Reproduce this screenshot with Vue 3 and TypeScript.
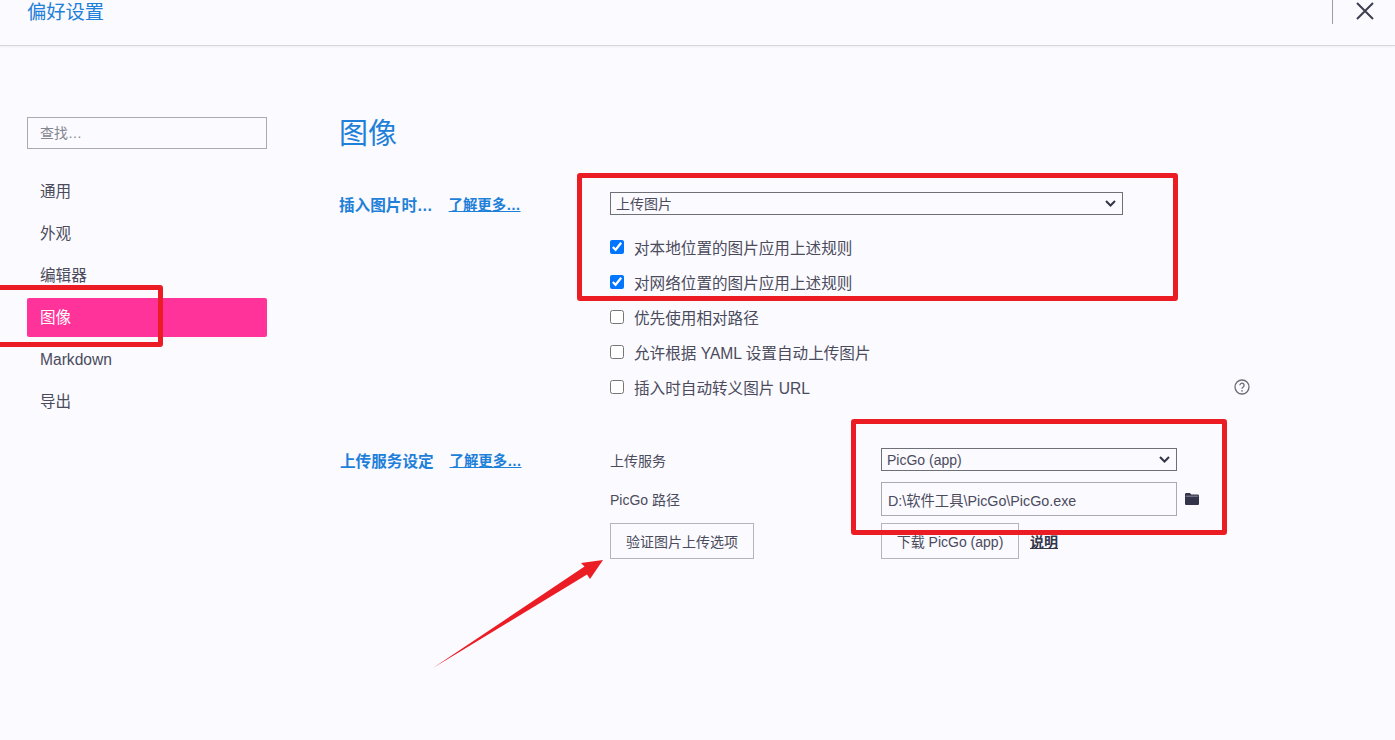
<template>
  <div class="page">
    <header class="topbar">
      <span class="topbar-title">偏好设置</span>
      <div class="topbar-right">
        <span class="divider"></span>
        <svg class="close" viewBox="0 0 18 18" fill="none" stroke="currentColor" stroke-width="2">
          <path d="M1 1l16 16M17 1L1 17" />
        </svg>
      </div>
    </header>

    <div class="content">
      <aside class="sidebar">
        <input class="search" type="text" placeholder="查找…" />
        <nav class="nav">
          <a v-for="item in navItems" :key="item" :class="['nav-item', { active: item === '图像' }]">{{ item }}</a>
        </nav>
      </aside>

      <main class="main">
        <h1 class="heading">图像</h1>

        <section class="section">
          <div class="section-label">
            <strong>插入图片时…</strong>
            <a class="more">了解更多…</a>
          </div>
          <div class="section-body">
            <select class="select select-wide">
              <option>上传图片</option>
            </select>
            <div class="checks">
              <label v-for="row in checkRows" :key="row.text" class="check">
                <input type="checkbox" :checked="row.on" />
                <span>{{ row.text }}</span>
                <svg v-if="row.help" class="help" viewBox="0 0 16 16" fill="none" stroke="currentColor">
                  <circle cx="8" cy="8" r="7" stroke-width="1.3" />
                  <path d="M5.9 6.3a2.1 2.1 0 1 1 3.3 1.7c-.8.5-1.2.9-1.2 1.8" stroke-width="1.3" />
                  <circle cx="8" cy="11.9" r=".8" fill="currentColor" stroke="none" />
                </svg>
              </label>
            </div>
          </div>
        </section>

        <section class="section section-upload">
          <div class="section-label">
            <strong>上传服务设定</strong>
            <a class="more">了解更多…</a>
          </div>
          <div class="section-body">
            <div class="svc-row">
              <span>上传服务</span>
              <select class="select">
                <option>PicGo (app)</option>
              </select>
            </div>
            <div class="svc-row svc-path">
              <span>PicGo 路径</span>
              <input class="path" type="text" value="D:\软件工具\PicGo\PicGo.exe" readonly />
              <svg class="folder" viewBox="0 0 14 12" fill="currentColor">
                <path d="M1.300 0h3.600l1.500 1.500h6.300c.7 0 1.300.6 1.300 1.300v7.900c0 .7-.6 1.300-1.300 1.300H1.300C.6 12 0 11.400 0 10.700V1.300C0 .6.600 0 1.300 0z" />
                <path d="M.8 3.200h12.400" stroke="#c9c9d6" stroke-width=".6" fill="none" />
              </svg>
            </div>
            <div class="svc-row svc-actions">
              <div><button class="btn btn-verify">验证图片上传选项</button></div>
              <button class="btn">下载 PicGo (app)</button>
              <a class="explain">说明</a>
            </div>
          </div>
        </section>
      </main>
    </div>

    <!-- annotations drawn over the screenshot -->
    <div class="mark mark-nav"></div>
    <div class="mark mark-insert"></div>
    <div class="mark mark-service"></div>
    <svg class="arrow" viewBox="0 0 1395 740">
      <path d="M433 668L584.500 566.500 581 563 603 560 590 579 587 574.500z" fill="#ec1c24" />
    </svg>
  </div>
</template>

<script setup lang="ts">
type CheckRow = {
  text: string
  on: boolean
  help?: boolean
}

const navItems: string[] = ['通用', '外观', '编辑器', '图像', 'Markdown', '导出']

const checkRows: CheckRow[] = [
  { text: '对本地位置的图片应用上述规则', on: true },
  { text: '对网络位置的图片应用上述规则', on: true },
  { text: '优先使用相对路径', on: false },
  { text: '允许根据 YAML 设置自动上传图片', on: false },
  { text: '插入时自动转义图片 URL', on: false, help: true },
]
</script>

<style>
html,
body {
  margin: 0;
  background: #fafaff;
}
</style>

<style scoped>
.page {
  position: relative;
  width: 1395px;
  height: 740px;
  overflow: hidden;
  background: #fafaff;
  color: #4b4b5c;
  font-family: 'Liberation Sans', 'Noto Sans CJK SC', sans-serif;
  font-size: 14px;
}
.topbar {
  display: flex;
  justify-content: space-between;
  align-items: flex-start;
  height: 46px;
  padding: 0 21px 0 27px;
  box-sizing: border-box;
  border-bottom: 1px solid #d6d6dc;
  box-shadow: 0 1px 2px rgba(0, 0, 0, 0.05);
}
.topbar-title {
  color: #1e80d8;
  font-size: 19.300px;
  line-height: 25px;
}
.topbar-right {
  display: flex;
  align-items: flex-start;
  gap: 23px;
}
.divider {
  width: 1px;
  height: 24px;
  background: #9c9ca6;
}
.close {
  width: 18px;
  height: 18px;
  margin-top: 2px;
  color: #3d3d50;
}
.content {
  display: flex;
  padding-left: 27px;
}
.sidebar {
  width: 240px;
  padding-top: 71px;
}
.search {
  display: block;
  width: 100%;
  height: 32px;
  box-sizing: border-box;
  padding: 0 12px;
  border: 1px solid #a9a9b1;
  background: transparent;
  font: inherit;
  font-size: 14px;
  outline: none;
}
.search::placeholder {
  color: #85858f;
}
.nav {
  display: flex;
  flex-direction: column;
  gap: 3px;
  margin-top: 23px;
}
.nav-item {
  height: 39px;
  padding-left: 13px;
  border-radius: 2px;
  font-size: 15.6px;
  line-height: 39px;
}
.nav-item.active {
  background: #ff3399;
  color: #fff;
}
.main {
  width: 910px;
  margin-left: 73px;
}
.heading {
  margin: 68px 0 38px -1px;
  color: #1e80d8;
  font-size: 29px;
  font-weight: 400;
  line-height: 40px;
}
.section {
  display: grid;
  grid-template-columns: 270px 640px;
}
.section-upload {
  margin-top: 49px;
}
.section-label {
  display: flex;
  align-items: center;
  gap: 16px;
  height: 23px;
  margin-left: -1px;
  color: #1e80d8;
}
.section-label strong {
  font-size: 15.600px;
}
.section-upload .section-label {
  margin-left: 0;
}
.more {
  font-size: 14.400px;
  font-weight: 700;
  text-decoration: underline;
}
.select {
  display: block;
  width: 296px;
  height: 23px;
  box-sizing: border-box;
  padding: 0 24px 0 5px;
  border: 1px solid #6f6f78;
  border-radius: 0;
  appearance: none;
  background: transparent url("data:image/svg+xml,%3Csvg xmlns='http://www.w3.org/2000/svg' width='11' height='7'%3E%3Cpath d='M1 1l4.500 4.500L10 1' fill='none' stroke='%2334344a' stroke-width='2'/%3E%3C/svg%3E") no-repeat right 6px center;
  color: inherit;
  font: inherit;
  font-size: 14px;
}
.select-wide {
  width: 513px;
}
.checks {
  display: flex;
  flex-direction: column;
  gap: 11px;
  margin-top: 20px;
}
.check {
  display: flex;
  align-items: center;
  gap: 10px;
  height: 24px;
  font-size: 15.6px;
}
.check input {
  width: 14px;
  height: 14px;
  margin: 0;
}
.help {
  width: 16px;
  height: 16px;
  margin-left: auto;
  color: #6b6b76;
}
.svc-row {
  display: grid;
  grid-template-columns: 271px auto 1fr;
  align-items: center;
}
.svc-path {
  margin-top: 11px;
}
.path {
  width: 296px;
  height: 34px;
  box-sizing: border-box;
  padding: 0 6px;
  border: 1px solid #a9a9b1;
  background: transparent;
  color: inherit;
  font: inherit;
  font-size: 14.300px;
  outline: none;
}
.folder {
  width: 14px;
  height: 12px;
  margin-left: 8px;
  color: #34344a;
}
.svc-actions {
  grid-template-columns: 271px 138px 1fr;
  margin-top: 7px;
}
.btn {
  width: 138px;
  height: 36px;
  box-sizing: border-box;
  padding: 0;
  border: 1px solid #b4b4bc;
  background: transparent;
  color: inherit;
  font: inherit;
  font-size: 14px;
}
.btn-verify {
  display: block;
  width: 144px;
}
.explain {
  margin-left: 11px;
  color: #34344a;
  font-weight: 700;
  text-decoration: underline;
}
.mark {
  position: absolute;
  box-sizing: border-box;
  border: 5px solid #ec1c24;
  border-radius: 3px;
}
.mark-nav {
  left: -12px;
  top: 285px;
  width: 175px;
  height: 62px;
}
.mark-insert {
  left: 577px;
  top: 173px;
  width: 601px;
  height: 128px;
}
.mark-service {
  left: 851px;
  top: 419px;
  width: 376px;
  height: 116px;
}
.arrow {
  position: absolute;
  left: 0;
  top: 0;
  width: 1395px;
  height: 740px;
  pointer-events: none;
}
</style>
